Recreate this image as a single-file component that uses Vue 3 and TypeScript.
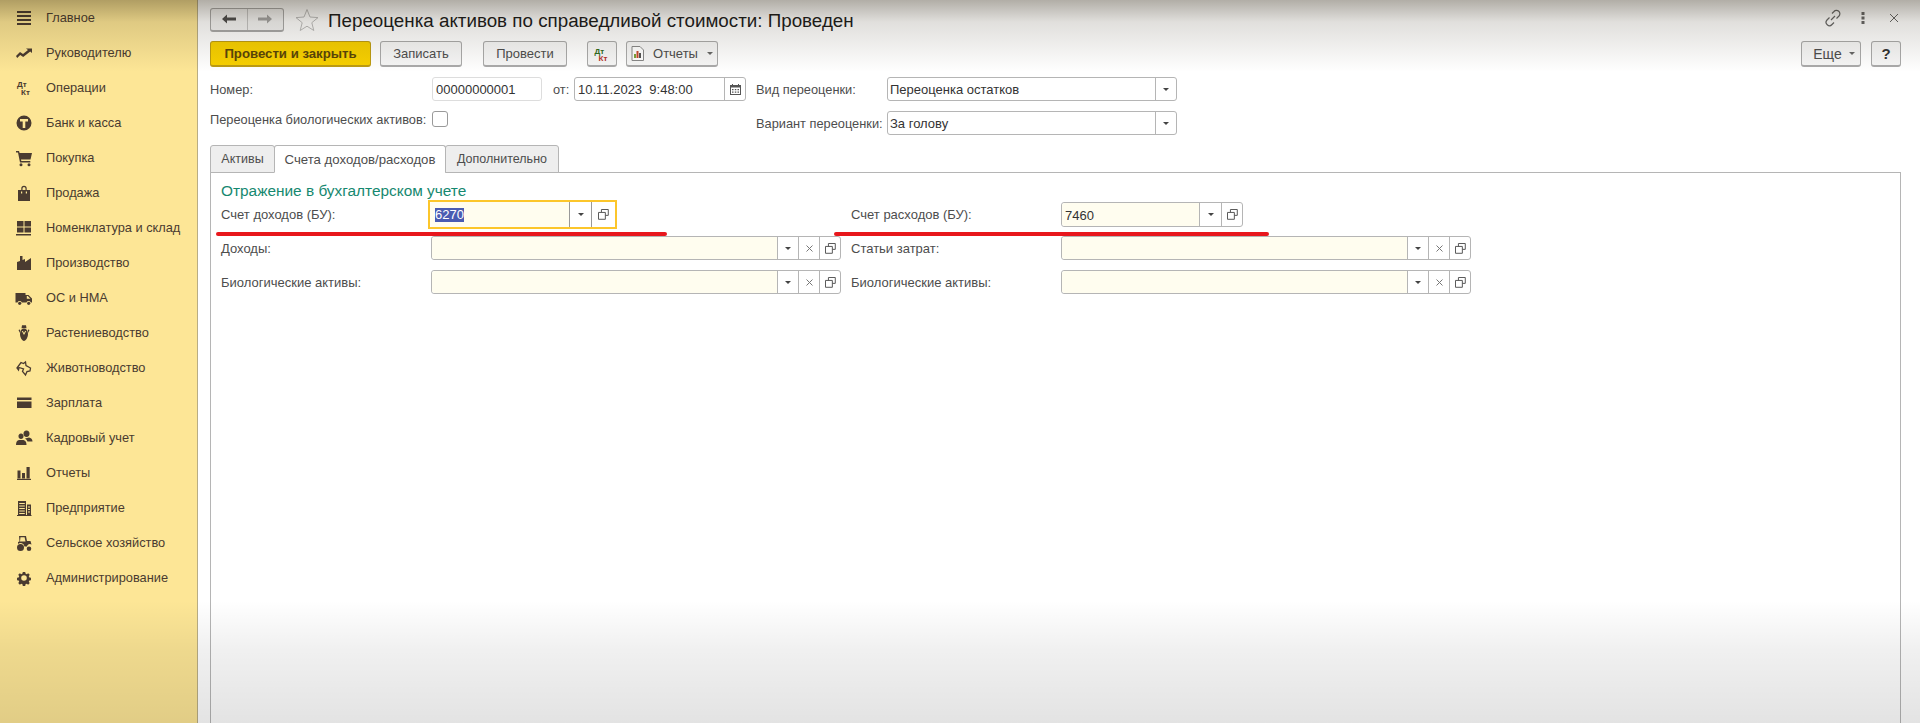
<script setup lang="ts">
interface NavItem { label: string; icon: string }
interface Field { label: string; value?: string; short?: boolean; focus?: boolean }

const nav: NavItem[] = [
  { label: 'Главное', icon: 'menu' },
  { label: 'Руководителю', icon: 'trend' },
  { label: 'Операции', icon: 'dtkt' },
  { label: 'Банк и касса', icon: 'bank' },
  { label: 'Покупка', icon: 'cart' },
  { label: 'Продажа', icon: 'bag' },
  { label: 'Номенклатура и склад', icon: 'grid' },
  { label: 'Производство', icon: 'factory' },
  { label: 'ОС и НМА', icon: 'truck' },
  { label: 'Растениеводство', icon: 'corn' },
  { label: 'Животноводство', icon: 'animal' },
  { label: 'Зарплата', icon: 'card' },
  { label: 'Кадровый учет', icon: 'people' },
  { label: 'Отчеты', icon: 'bars' },
  { label: 'Предприятие', icon: 'building' },
  { label: 'Сельское хозяйство', icon: 'tractor' },
  { label: 'Администрирование', icon: 'gear' },
]

const fields: Field[] = [
  { label: 'Счет доходов (БУ):', value: '6270', short: true, focus: true },
  { label: 'Счет расходов (БУ):', value: '7460', short: true },
  { label: 'Доходы:' },
  { label: 'Статьи затрат:' },
  { label: 'Биологические активы:' },
  { label: 'Биологические активы:' },
]
</script>

<template>
  <div class="page">
    <aside class="side">
      <div v-for="item in nav" :key="item.label" class="nav-row">
        <svg class="nav-ic" viewBox="0 0 18 18" fill="#4a3b30">
          <template v-if="item.icon === 'menu'">
            <rect x="2" y="2" width="14" height="2" /><rect x="2" y="6" width="14" height="2" /><rect x="2" y="10" width="14" height="2" /><rect x="2" y="14" width="14" height="2" />
          </template>
          <path v-else-if="item.icon === 'trend'" d="M1 12l4-4 3 2 5-4-2-1.500h6v4.500l-1.800-1.500-7 5.500-3-2-3 3z" />
          <template v-else-if="item.icon === 'dtkt'">
            <text x="2" y="8" class="dt">Дт</text><text x="6" y="16" class="dt">Кт</text>
          </template>
          <path v-else-if="item.icon === 'bank'" fill-rule="evenodd" d="M9 1.500a7.500 7.500 0 1 0 0 15 7.500 7.500 0 0 0 0-15zM5 5h8v2.500h-2.700V14H7.700V7.500H5z" />
          <path v-else-if="item.icon === 'cart'" d="M1 2h3l.600 2H17l-1.500 6.500H6l.300 1.500h9v1.500H5L3 3.500H1zM6 14.200a1.500 1.500 0 1 1 0 3 1.500 1.500 0 0 1 0-3zM14 14.200a1.500 1.500 0 1 1 0 3 1.500 1.500 0 0 1 0-3z" />
          <path v-else-if="item.icon === 'bag'" fill-rule="evenodd" d="M3 6h3.300V4.500a2.700 2.700 0 0 1 5.400 0V6H15v11H3zM7.500 6h3V4.500a1.500 1.500 0 0 0-3 0zM6 7.500v2h1.200v-2zM10.800 7.500v2H12v-2z" />
          <template v-else-if="item.icon === 'grid'">
            <rect x="2" y="2" width="6.500" height="5.500" /><rect x="9.500" y="2" width="6.500" height="5.500" /><rect x="2" y="8.500" width="6.500" height="5" /><rect x="9.500" y="8.500" width="6.500" height="5" /><rect x="1" y="15" width="15" height="1.500" />
          </template>
          <path v-else-if="item.icon === 'factory'" d="M2 16V8l3-1V2h2.500v4L10 5v3l6-4v12z" />
          <template v-else-if="item.icon === 'truck'">
            <path fill-rule="evenodd" d="M0.500 4h10v2h3l3.500 3.500V13.500h-1.200a2.300 2.300 0 0 0-4.300 0H6.800a2.300 2.300 0 0 0-4.300 0H.500zM11.800 7v2.800h3.600L12.800 7z" />
            <circle cx="4.700" cy="14.300" r="1.600" /><circle cx="13.700" cy="14.300" r="1.600" />
          </template>
          <template v-else-if="item.icon === 'corn'">
            <path fill-rule="evenodd" d="M9 4.500c2.600 0 4 2.200 4 5.500 0 3.500-2 6.500-4 7-2-.500-4-3.500-4-7 0-3.300 1.400-5.500 4-5.500zM6.800 7l2.200 4 2.200-4-1 0L9 9 7.800 7z" />
            <path d="M7 1.200h4l.500 3H6.500zM3.500 6l1.500-.500v3.500zM14.500 6l-1.500-.500v3.500z" />
          </template>
          <path v-else-if="item.icon === 'animal'" fill="none" stroke="#4a3b30" stroke-width="1.300" d="M2 9l4-5.500 2.500 1 2-1.500 .500 3.500 4.500 2.500-.500 3-3 .500-1.500 3.500-3-3.500 1-2.500L4 8.500 3.500 11z" />
          <path v-else-if="item.icon === 'card'" fill-rule="evenodd" d="M2 3.500h14.500v10.500H2zM2 6v1.500h14.500V6z" />
          <path v-else-if="item.icon === 'people'" d="M11.500 1.500a3 3 0 0 1 3 3.500c0 1.500-1 3-3 3s-3-1.500-3-3a3 3 0 0 1 3-3.500zM6 4.500a2.500 2.500 0 0 1 2.500 3c0 1.300-1 2.500-2.500 2.500S3.500 8.800 3.500 7.500A2.500 2.500 0 0 1 6 4.500zM14 8.500c2 .500 3.500 1.500 3.500 4h-5c-.500-1.300-1.300-2.300-2.500-3zM1 16c0-3 1-4.500 3-5h4.500c2.300.500 3 2.500 3 5z" />
          <template v-else-if="item.icon === 'bars'">
            <rect x="2.500" y="6.500" width="3" height="8" /><rect x="7" y="9" width="3" height="5.500" /><rect x="11.500" y="3" width="3.200" height="11.500" /><rect x="2" y="14.800" width="14" height="1.200" />
          </template>
          <template v-else-if="item.icon === 'building'">
            <path fill-rule="evenodd" d="M3 2h8v14H3zM4.200 4v1h5.600V4zM4.200 6.500v1h5.600v-1zM4.200 9v1h5.600V9zM4.200 11.500v1h5.600v-1zM4.200 14v1h5.600v-1z" />
            <path fill-rule="evenodd" d="M12 5.500h4V16h-4zM13 7.500v1h2v-1zM13 10v1h2v-1zM13 12.500v1h2v-1z" />
            <rect x="2" y="16" width="14.500" height="1" />
          </template>
          <path v-else-if="item.icon === 'tractor'" fill-rule="evenodd" d="M4 2h7l1 5h3.500l1 3.500a2.800 2.800 0 0 0-4.500 2H9.500A4 4 0 0 0 3 10V8l1.500-.5zM5.500 3.200 5 7.500h5.500l-.900-4.300zM5.500 10a3.500 3.500 0 1 1 0 7 3.500 3.500 0 0 1 0-7zM14 12.500a2.300 2.300 0 1 1 0 4.600 2.300 2.300 0 0 1 0-4.600z" />
          <path v-else-if="item.icon === 'gear'" transform="translate(1.800 1.800) scale(.8)" fill-rule="evenodd" d="M7.500 1.500h3l.400 2 1.500.700 1.800-1.200 2 2-1.200 1.800.700 1.500 2 .400v3l-2 .400-.700 1.500 1.200 1.800-2 2-1.800-1.200-1.500.700-.400 2h-3l-.400-2-1.500-.700-1.800 1.200-2-2 1.200-1.800-.700-1.500-2-.400v-3l2-.400.700-1.500L1.800 5l2-2 1.800 1.200 1.500-.700zM9 5.500a3.500 3.500 0 1 0 0 7 3.500 3.500 0 0 0 0-7z" />
        </svg>
        <span class="nav-label">{{ item.label }}</span>
      </div>
    </aside>

    <main class="main">
      <header class="head">
        <div class="hist">
          <button class="hist-btn">
            <svg width="14" height="10" viewBox="0 0 14 10"><path d="M0 5l5-4.500V3.500h9v3H5v3z" fill="#4d4d4d" /></svg>
          </button>
          <button class="hist-btn">
            <svg width="14" height="10" viewBox="0 0 14 10"><path d="M14 5L9 .5V3.500H0v3h9v3z" fill="#a3a3a3" /></svg>
          </button>
        </div>
        <svg class="star" width="24" height="24" viewBox="0 0 24 24"><path d="M12 1.500l3 7.500 8 .600-6.200 5.100 2 7.800L12 18.200l-6.800 4.300 2-7.800L1 9.600 9 9z" fill="none" stroke="#bdbdbd" stroke-width="1" /></svg>
        <h1 class="title">Переоценка активов по справедливой стоимости: Проведен</h1>
        <div class="head-ics">
          <svg width="18" height="18" viewBox="0 0 18 18" fill="none" stroke="#666" stroke-width="1.200"><path d="M7 11l4-4M8 4.500l2-2a3 3 0 0 1 5 4.500l-2.500 2.500M10 13.500l-2 2a3 3 0 0 1-5-4.500L5.500 8.500" /></svg>
          <svg width="4" height="12" viewBox="0 0 4 12" fill="#666"><rect x="0.500" y="0" width="3" height="3" /><rect x="0.500" y="4.500" width="3" height="3" /><rect x="0.500" y="9" width="3" height="3" /></svg>
          <svg width="10" height="10" viewBox="0 0 10 10" stroke="#666" stroke-width="1"><path d="M1 1l8 8M9 1l-8 8" /></svg>
        </div>
      </header>

      <div class="toolbar">
        <button class="btn primary">Провести и закрыть</button>
        <button class="btn w-save">Записать</button>
        <button class="btn w-post">Провести</button>
        <button class="btn w-dt">
          <svg width="16" height="16" viewBox="0 0 16 16"><text x="0.500" y="7.500" class="dt green">Дт</text><text x="4.500" y="15" class="dt red">Кт</text></svg>
        </button>
        <button class="btn w-rep">
          <svg width="13" height="15" viewBox="0 0 13 15"><path d="M1 .500h8l3.500 3.500v10.500H1z" fill="#fff" stroke="#888" /><rect x="3" y="8" width="2" height="4" fill="#7aa33a" /><rect x="5.500" y="5" width="2" height="7" fill="#c8482c" /><rect x="8" y="7" width="2" height="5" fill="#555" /></svg>
          <span>Отчеты</span><i class="caret" />
        </button>
        <button class="btn w-more"><span>Еще</span><i class="caret" /></button>
        <button class="btn w-help">?</button>
      </div>

      <section class="form">
        <div class="form-left">
          <div class="line">
            <label class="lbl lbl-num">Номер:</label>
            <div class="box num"><span class="val">00000000001</span></div>
            <label class="lbl lbl-from">от:</label>
            <div class="box date">
              <span class="val grow">10.11.2023 &nbsp;9:48:00</span>
              <span class="cell cell-cal">
                <svg width="11" height="11" viewBox="0 0 11 11" fill="#555"><path fill-rule="evenodd" d="M0 1h2V0h1v1h5V0h1v1h2v10H0zM1 3.500V10h9V3.500zM2 5h1.500v1.300H2zM4.800 5h1.500v1.300H4.800zM7.500 5H9v1.300H7.500zM2 7.500h1.500v1.300H2zM4.800 7.500h1.500v1.300H4.800zM7.500 7.500H9v1.300H7.500z" /></svg>
              </span>
            </div>
          </div>
          <div class="line line-check">
            <label class="lbl lbl-num">Переоценка биологических активов:</label>
            <span class="check" />
          </div>
        </div>
        <div class="form-right">
          <div class="line">
            <label class="lbl lbl-sel">Вид переоценки:</label>
            <div class="box sel"><span class="val grow">Переоценка остатков</span><span class="cell cell-dd"><i class="caret dark" /></span></div>
          </div>
          <div class="line">
            <label class="lbl lbl-sel">Вариант переоценки:</label>
            <div class="box sel"><span class="val grow">За голову</span><span class="cell cell-dd"><i class="caret dark" /></span></div>
          </div>
        </div>
      </section>

      <nav class="tabs">
        <div class="tab t1">Активы</div>
        <div class="tab t2 active">Счета доходов/расходов</div>
        <div class="tab t3">Дополнительно</div>
      </nav>

      <section class="panel">
        <h2 class="panel-title">Отражение в бухгалтерском учете</h2>
        <div class="grid">
          <template v-for="f in fields" :key="f.label + f.value">
            <label class="lbl">{{ f.label }}</label>
            <div class="box acc" :class="{ short: f.short, focus: f.focus }">
              <span class="val grow input">
                <span :class="{ picked: f.focus }">{{ f.value }}</span>
              </span>
              <span class="cell cell-dd"><i class="caret dark" /></span>
              <span v-if="!f.short" class="cell cell-x">
                <svg width="7" height="7" viewBox="0 0 7 7" stroke="#777"><path d="M.5.500l6 6M6.500.500l-6 6" /></svg>
              </span>
              <span class="cell cell-open">
                <svg width="11" height="11" viewBox="0 0 11 11" fill="none" stroke="#555"><path d="M3.500 3.500V.500h7v6h-3M.500 3.500h7v7h-7z" transform="scale(.98)" /></svg>
              </span>
            </div>
          </template>
        </div>
      </section>
    </main>

    <div class="mark mark-a" />
    <div class="mark mark-b" />
    <div class="shade" />
  </div>
</template>

<style>
html, body { margin: 0; background: #fff; }
</style>

<style scoped>
.page { position: relative; display: flex; width: 1920px; height: 723px; overflow: hidden; font: 13px "Liberation Sans", Arial, sans-serif; color: #4d4d4d; background: #fff; }
button { font: inherit; padding: 0; }

.side { width: 197px; flex: none; background: #fde696; border-right: 1px solid #b9ad84; }
.nav-row { height: 35px; display: flex; align-items: center; }
.nav-ic { width: 18px; height: 18px; margin-left: 15px; flex: none; }
.nav-label { margin-left: 13px; color: #4a3b30; white-space: nowrap; font-size: 12.800px; }
.dt { font: bold 8px "Liberation Sans", sans-serif; fill: #4a3b30; }
.dt.green { fill: #2f6b1d; }
.dt.red { fill: #b5322a; }

.main { flex: 1; min-width: 0; display: flex; flex-direction: column; padding: 8px 19px 0 12px; }

.head { display: flex; align-items: center; height: 23px; }
.hist { display: flex; width: 74px; height: 24px; box-sizing: border-box; border: 1px solid #a9a9a9; border-bottom-width: 2px; border-radius: 3px; background: #f4f4f4; }
.hist-btn { flex: 1; border: 0; background: none; display: flex; align-items: center; justify-content: center; }
.hist-btn + .hist-btn { border-left: 1px solid #c4c4c4; }
.star { margin-left: 11px; }
.title { margin: 2px 0 0 9px; font-size: 18.800px; font-weight: 400; color: #1a1a1a; white-space: nowrap; }
.head-ics { margin-left: auto; display: flex; align-items: center; margin-right: 2px; margin-bottom: 3px; }
.head-ics svg:nth-child(2) { margin-left: 19px; }
.head-ics svg:nth-child(3) { margin-left: 24px; }

.toolbar { display: flex; margin-top: 10px; height: 26px; }
.btn { height: 26px; box-sizing: border-box; border: 1px solid #aaa; border-bottom-width: 2px; border-radius: 3px; background: #f6f6f6; color: #4d4d4d; display: flex; align-items: center; justify-content: center; }
.primary { width: 161px; background: #f8d000; border-color: #bd9c12; color: #5a4508; font-weight: 700; font-size: 13.200px; }
.w-save { width: 82px; margin-left: 9px; }
.w-post { width: 84px; margin-left: 21px; }
.w-dt { width: 30px; margin-left: 20px; }
.w-rep { width: 92px; margin-left: 9px; gap: 9px; }
.w-more { width: 60px; margin-left: auto; gap: 7px; padding-left: 6px; font-size: 14px; }
.w-help { width: 30px; margin-left: 10px; font-size: 15px; font-weight: 700; color: #333; }
.caret { display: inline-block; width: 0; height: 0; border: 3px solid transparent; border-top: 3px solid #666; border-bottom: 0; }
.caret.dark { border-top-color: #444; }

.form { display: flex; margin-top: 10px; }
.form-left { width: 546px; display: flex; flex-direction: column; gap: 6px; }
.form-right { display: flex; flex-direction: column; gap: 10px; }
.line { display: flex; align-items: center; height: 24px; }
.lbl { white-space: nowrap; color: #4d4d4d; font-size: 12.800px; }
.lbl-num { min-width: 222px; }
.lbl-from { margin-left: 11px; width: 21px; }
.lbl-sel { width: 131px; }
.box { height: 24px; box-sizing: border-box; border: 1px solid #b5b5b5; border-radius: 3px; background: #fff; display: flex; align-items: stretch; }
.val { padding-left: 3px; line-height: 23px; color: #333; white-space: nowrap; }
.grow { flex: 1; min-width: 0; }
.cell { flex: none; display: flex; align-items: center; justify-content: center; border-left: 1px solid #b5b5b5; }
.cell-dd { width: 20px; }
.cell-cal { width: 20px; }
.cell-x, .cell-open { width: 20px; }
.num { width: 110px; border-color: #ddd; }
.date { width: 172px; }
.sel { width: 290px; }
.sel .val { padding-left: 2px; }
.check { width: 14px; height: 14px; border: 1px solid #9a9a9a; border-radius: 3px; background: #fff; }

.tabs { display: flex; margin-top: 10px; height: 27px; position: relative; z-index: 1; padding-left: 1px; }
.tab { box-sizing: border-box; height: 28px; border: 1px solid #b5b5b5; border-radius: 3px 3px 0 0; background: #eeeeee; padding-top: 6px; text-align: center; font-size: 12.500px; margin-left: -1px; }
.tab.active { background: #fff; border-bottom-color: #fff; }
.t1 { width: 65px; }
.t2 { width: 172px; font-size: 13.200px; }
.t3 { width: 114px; }

.panel { flex: 1; border: 1px solid #b5b5b5; border-bottom: 0; padding: 8px 0 0 10px; }
.panel-title { margin: 0; height: 21px; font-size: 15.400px; line-height: 19px; font-weight: 400; color: #16886f; }
.grid { display: grid; grid-template-columns: 210px 410px 220px 410px; column-gap: 0; grid-auto-rows: 24px; row-gap: 10px; align-items: start; }
.grid .lbl { line-height: 26px; font-size: 13px; }
.grid > :nth-child(4n + 3) { margin-left: 10px; }
.acc { width: 410px; background: #fff; }
.acc.short { width: 182px; height: 25px; }
.short .cell-dd { width: 21px; }
.short .val { line-height: 25px; }
.acc.focus { border: 0; box-shadow: 0 0 0 2px #fcc62b; border-radius: 0; width: 185px; margin-left: -1px; }
.focus .val { padding-left: 5px; }
.focus .cell { border-left-color: #999; }
.focus .cell-open { width: 23px; }
.input { background: #fffdef; border-radius: 3px 0 0 3px; }
.focus .input { line-height: 26px; }
.picked { background: #4a5cb2; color: #fff; display: inline-block; line-height: 14px; }

.mark { position: absolute; height: 4px; top: 232px; background: #e8171c; border-radius: 2px; }
.mark-a { left: 216px; width: 451px; }
.mark-b { left: 834px; width: 435px; }
.shade { position: absolute; inset: 0; pointer-events: none; background: linear-gradient(to bottom, rgba(40, 30, 10, .36) 0, rgba(40, 30, 10, .14) 22px, rgba(40, 30, 10, 0) 72px), linear-gradient(to bottom, rgba(0, 0, 0, 0) 600px, rgba(0, 0, 0, .06) 650px, rgba(0, 0, 0, .11) 723px); }
</style>
